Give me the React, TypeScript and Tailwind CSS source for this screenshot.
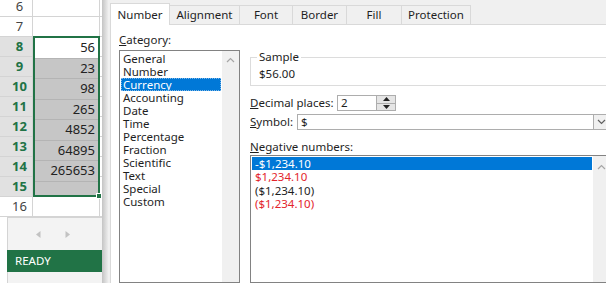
import React from "react";

const rows = [6, 7, 8, 9, 10, 11, 12, 13, 14, 15, 16];
const values: Record<number, string> = {
  8: "56",
  9: "23",
  10: "98",
  11: "265",
  12: "4852",
  13: "64895",
  14: "265653",
  15: "",
};

const categories = [
  "General",
  "Number",
  "Currency",
  "Accounting",
  "Date",
  "Time",
  "Percentage",
  "Fraction",
  "Scientific",
  "Text",
  "Special",
  "Custom",
];

const negatives = [
  { label: "-$1,234.10", red: false },
  { label: "$1,234.10", red: true },
  { label: "($1,234.10)", red: false },
  { label: "($1,234.10)", red: true },
];

const tabs = [
  { name: "Number", w: "w-[60px]" },
  { name: "Alignment", w: "w-[70px]" },
  { name: "Font", w: "w-[53px]" },
  { name: "Border", w: "w-[54px]" },
  { name: "Fill", w: "w-[55px]" },
  { name: "Protection", w: "w-[69px]" },
];

const ChevronUp = () => (
  <svg width="9" height="6" viewBox="0 0 9 6">
    <path d="M1 5 L4.5 1.5 L8 5" fill="none" stroke="#a6a6a6" strokeWidth="1.2" />
  </svg>
);

const Sheet = () => {
  return (
    <div className="w-[102px] shrink-0 flex flex-col bg-white">
      <div className="h-[217px] overflow-hidden">
        <div className="flex -mt-[3px]">
          {/* row headers */}
          <div className="w-[33px] flex flex-col border-r border-[#d4d4d4]">
            {rows.map((r) => {
              const sel = r >= 8 && r <= 15;
              return (
                <div
                  key={r}
                  className={`h-[20px] flex items-center justify-center pl-[7px] border-b border-[#d4d4d4] text-[13px] ${
                    sel
                      ? "bg-[#e1e1e1] text-[#217346] font-bold"
                      : "bg-white text-[#444444]"
                  }`}
                >
                  {r}
                </div>
              );
            })}
          </div>
          {/* column cells */}
          <div className="w-[67px] flex flex-col">
            <div className="h-[20px] border-b border-r border-[#d4d4d4]" />
            <div className="h-[19px] border-r border-[#d4d4d4]" />
            <div className="relative h-[161px] border-2 border-[#217346] flex flex-col">
              {[8, 9, 10, 11, 12, 13, 14, 15].map((r) => (
                <div
                  key={r}
                  className={`flex-1 flex items-center justify-end pr-[3px] text-[13px] text-[#222222] ${
                    r === 8 ? "bg-white" : "bg-[#c6c6c6] border-t border-[#b4b4b4]"
                  }`}
                >
                  {values[r]}
                </div>
              ))}
              <div className="absolute -right-[4px] -bottom-[4px] w-[6px] h-[6px] bg-[#217346] border border-white" />
            </div>
            <div className="h-[20px] border-b border-r border-[#d4d4d4]" />
          </div>
          <div className="flex-1 flex flex-col">
            {rows.map((r) => (
              <div key={r} className="h-[20px] border-b border-[#d4d4d4]" />
            ))}
          </div>
        </div>
      </div>
      <div className="flex-1 flex flex-col pl-[7px]">
        <div className="h-[33px] bg-[#f3f3f3] border-l border-t border-[#d4d4d4] flex items-center gap-[24px] pl-[28px]">
          <svg width="5" height="7" viewBox="0 0 5 7">
            <path d="M4.5 0 L0 3.5 L4.5 7 Z" fill="#c2c2c2" />
          </svg>
          <svg width="5" height="7" viewBox="0 0 5 7">
            <path d="M0.5 0 L5 3.5 L0.5 7 Z" fill="#c2c2c2" />
          </svg>
        </div>
        <div className="h-[22px] bg-[#217346] text-white text-[11.5px] flex items-center pl-[8px]">
          READY
        </div>
        <div className="flex-1 bg-[#f3f3f3] border-l border-[#d4d4d4]" />
      </div>
    </div>
  );
};

const Dialog = () => {
  return (
    <div className="flex-1 min-w-0 flex flex-col bg-[#f0f0f0] pl-[2px] text-[11.5px] text-[#1e1e1e] leading-[16px]">
      {/* tabs */}
      <div className="h-[24px] flex items-end">
        {tabs.map((t, i) =>
          i === 0 ? (
            <div
              key={t.name}
              className={`${t.w} shrink-0 h-[22px] -mb-px bg-white border-l border-t border-r border-[#d9d9d9] flex items-center justify-center z-10`}
            >
              {t.name}
            </div>
          ) : (
            <div
              key={t.name}
              className={`${t.w} shrink-0 h-[19px] border-t border-r border-[#d9d9d9] flex items-center justify-center`}
            >
              {t.name}
            </div>
          )
        )}
      </div>
      {/* page */}
      <div className="flex-1 bg-white border-l border-t border-[#d9d9d9] flex pl-[8px]">
        {/* category */}
        <div className="w-[121px] shrink-0 flex flex-col pt-[7px]">
          <div>
            <span className="underline">C</span>ategory:
          </div>
          <div className="mt-[2px] flex-1 flex border border-[#828282]">
            <div className="flex-1 flex flex-col p-[1px]">
              {categories.map((c) => (
                <div
                  key={c}
                  className={`h-[13px] leading-[13px] pl-[2px] ${
                    c === "Currency"
                      ? "bg-[#0078d7] text-white outline-1 outline-dotted -outline-offset-1 outline-[#7fb6e6]"
                      : ""
                  }`}
                >
                  {c}
                </div>
              ))}
            </div>
            <div className="w-[17px] bg-[#f0f0f0] flex justify-center pt-[6px]">
              <div>
                <ChevronUp />
              </div>
            </div>
          </div>
        </div>
        {/* right side */}
        <div className="w-[360px] shrink-0 ml-[10px] flex flex-col pt-[32px]">
          <div className="relative h-[29px] border border-[#dcdcdc] pl-[8px] pt-[8px]">
            <span className="absolute -top-[9px] left-[6px] bg-white px-[2px]">Sample</span>
            $56.00
          </div>
          <div className="mt-[9px] h-[16px] flex items-center">
            <div className="w-[87px]">
              <span className="underline">D</span>ecimal places:
            </div>
            <div className="w-[40px] h-[16px] border border-[#adadad] flex items-center pl-[3px]">2</div>
            <div className="w-[19px] h-[16px] border border-l-0 border-[#adadad] flex flex-col">
              <div className="flex-1 bg-[#e5e5e5] border-b border-[#adadad] flex items-center justify-center">
                <svg width="7" height="4" viewBox="0 0 7 4">
                  <path d="M0 4 L3.5 0 L7 4 Z" fill="#222" />
                </svg>
              </div>
              <div className="flex-1 bg-[#e5e5e5] flex items-center justify-center">
                <svg width="7" height="4" viewBox="0 0 7 4">
                  <path d="M0 0 L3.5 4 L7 0 Z" fill="#222" />
                </svg>
              </div>
            </div>
          </div>
          <div className="mt-[3px] h-[16px] flex items-center">
            <div className="w-[47px]">
              <span className="underline">S</span>ymbol:
            </div>
            <div className="flex-1 h-[16px] border border-[#adadad] flex">
              <div className="flex-1 flex items-center pl-[3px]">$</div>
              <div className="w-[16px] bg-[#f0f0f0] border-l border-[#adadad] flex items-center justify-center">
                <svg width="9" height="6" viewBox="0 0 9 6">
                  <path d="M1 1 L4.5 4.5 L8 1" fill="none" stroke="#606060" strokeWidth="1.2" />
                </svg>
              </div>
            </div>
          </div>
          <div className="mt-[9px]">
            <span className="underline">N</span>egative numbers:
          </div>
          <div className="flex-1 flex border border-[#828282]">
            <div className="flex-1 flex flex-col p-[1px]">
              {negatives.map((n, i) => (
                <div
                  key={i}
                  className={`h-[13.3px] leading-[13px] pl-[3px] ${
                    i === 0 ? "bg-[#0078d7] text-white" : n.red ? "text-[#e3242b]" : ""
                  }`}
                >
                  {n.label}
                </div>
              ))}
            </div>
            <div className="w-[16px] bg-[#f0f0f0] flex justify-center pt-[8px]">
              <div>
                <ChevronUp />
              </div>
            </div>
          </div>
        </div>
      </div>
    </div>
  );
};

const App = () => {
  return (
    <div className="w-[606px] h-[283px] overflow-hidden flex bg-white font-['Noto_Sans','Open_Sans',sans-serif]">
      <Sheet />
      <div className="w-[6px] shrink-0 bg-gradient-to-r from-[#c4c4c4] to-[#ececec]" />
      <Dialog />
    </div>
  );
};

export default App;
